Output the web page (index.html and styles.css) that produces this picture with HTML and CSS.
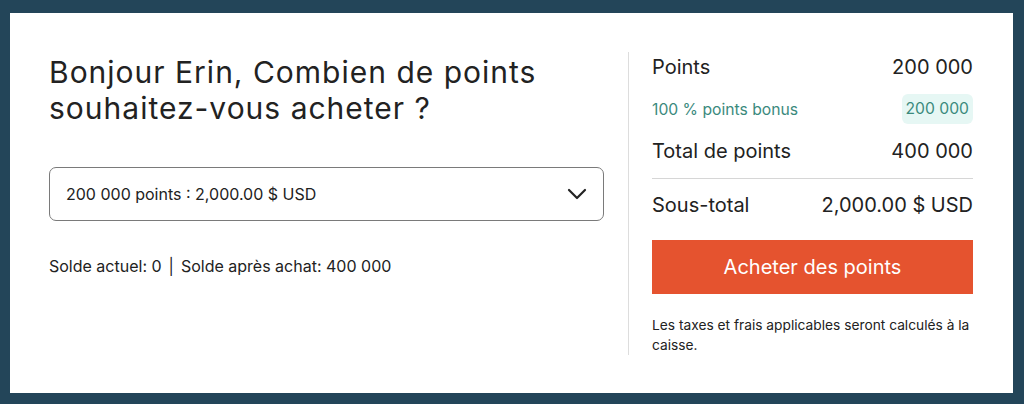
FILE: index.html
```html
<!DOCTYPE html>
<html lang="fr">
<head>
<meta charset="utf-8">
<link rel="stylesheet" href="styles.css">
</head>
<body>
<div class="card">
  <section class="left">
    <h1 class="title">Bonjour Erin, Combien de points souhaitez-vous acheter ?</h1>
    <div class="select">
      <span>200 000 points : 2,000.00 $ USD</span>
      <svg class="chev" width="20" height="12" viewBox="0 0 20 12"><path d="M2 2 L10 10 L18 2" fill="none" stroke="#222" stroke-width="2.2" stroke-linecap="round" stroke-linejoin="round"/></svg>
    </div>
    <p class="balance">Solde actuel: 0<span class="sep">|</span>Solde après achat: 400 000</p>
  </section>
  <aside class="right">
    <div class="row big"><span>Points</span><span>200 000</span></div>
    <div class="row bonus"><span>100 % points bonus</span><span class="badge">200 000</span></div>
    <div class="row big"><span>Total de points</span><span>400 000</span></div>
    <div class="row big sub"><span>Sous-total</span><span>2,000.00 $ USD</span></div>
    <button class="buy">Acheter des points</button>
    <p class="note">Les taxes et frais applicables seront calculés à la caisse.</p>
  </aside>
</div>
</body>
</html>
```
FILE: styles.css
```css
html, body { margin: 0; padding: 0; }
body {
  background: #234559;
  width: 1024px;
  height: 404px;
  font-family: Inter, "Noto Sans", sans-serif;
  color: #222;
  padding: 13px 11px 11px 10px;
  box-sizing: border-box;
}
.card {
  background: #fff;
  height: 380px;
  display: flex;
  box-sizing: border-box;
  padding: 39px 40px 0 39px;
}
.left { width: 555px; }
.title {
  margin: 2px 0 0 0;
  font-weight: 400;
  font-size: 30px;
  line-height: 36px;
  letter-spacing: 1px;
}
.select {
  margin-top: 41px;
  height: 54px;
  border: 1px solid #7a7a7a;
  border-radius: 7px;
  box-sizing: border-box;
  display: flex;
  align-items: center;
  justify-content: space-between;
  padding: 0 16px 0 16px;
  font-size: 16px;
}
.balance {
  margin: 34px 0 0 0;
  font-size: 16px;
  line-height: 22px;
}
.sep { margin: 0 7px; }
.right {
  margin-left: 24px;
  border-left: 1px solid #ddd;
  padding-left: 23px;
  width: 321px;
  height: 303px;
}
.row {
  display: flex;
  justify-content: space-between;
  align-items: center;
  height: 30px;
}
.big { font-size: 20px; }
.bonus {
  color: #3b8a7d;
  font-size: 15.7px;
  margin: 12px 0;
}
.badge {
  background: #e6f7f4;
  border-radius: 6px;
  padding: 0 4px;
  height: 30px;
  line-height: 30px;
}
.sub {
  border-top: 1px solid #d6d6d6;
  margin-top: 12px;
  padding-top: 11px;
  box-sizing: border-box;
  height: auto;
}
.sub span { line-height: 30px; }
.buy {
  display: block;
  margin-top: 20px;
  width: 100%;
  height: 54px;
  background: #e5532f;
  border: none;
  color: #fff;
  font-family: inherit;
  font-size: 20px;
}
.note {
  margin: 21px 0 0;
  font-size: 13.75px;
  line-height: 20px;
}
```
